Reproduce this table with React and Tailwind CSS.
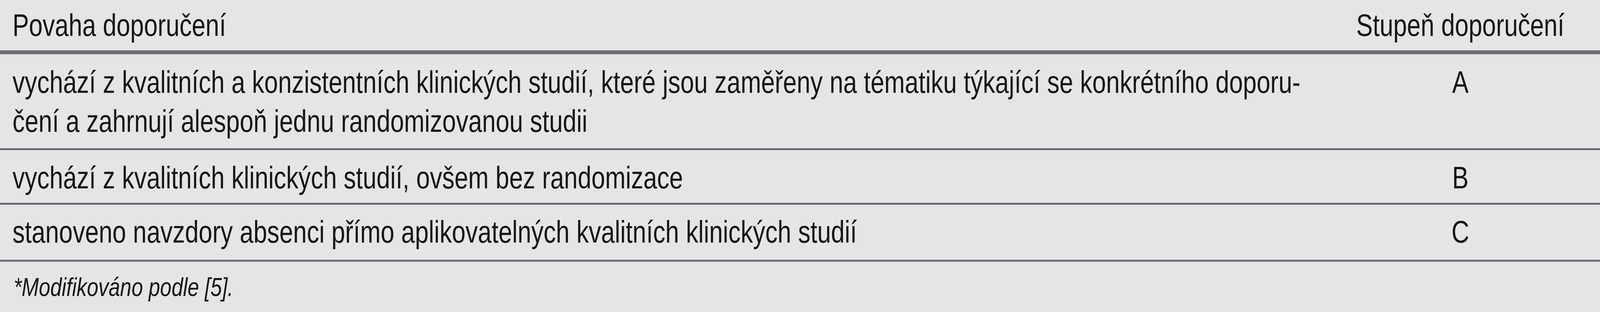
import React from "react";

const rows = [
  {
    text: (
      <>
        vychází z kvalitních a konzistentních klinických studií, které jsou zaměřeny na tématiku týkající se konkrétního doporu-
        <br />
        čení a zahrnují alespoň jednu randomizovanou studii
      </>
    ),
    grade: "A",
    pad: "pt-[22px] pb-[19px]",
  },
  {
    text: "vychází z kvalitních klinických studií, ovšem bez randomizace",
    grade: "B",
    pad: "pt-[21px] pb-[14px]",
  },
  {
    text: "stanoveno navzdory absenci přímo aplikovatelných kvalitních klinických studií",
    grade: "C",
    pad: "pt-[20px] pb-[21px]",
  },
];

export default function App() {
  // the table is laid out at 5133px and fitted to the window width
  const fit = typeof window !== "undefined" ? Math.min(1, window.innerWidth / 5133) : 1;

  return (
    <div className="w-full h-[800px] overflow-hidden bg-[#e4e5e7]">
      <div
        className="w-[5133px] h-[800px] origin-top-left text-[#161616] font-['Liberation_Sans',Arial,sans-serif]"
        style={{ transform: `scaleX(${fit})` }}
      >
        <div className="grid grid-cols-[4237px_1fr] border-b-[10px] border-[#6d6e71] pt-[15px] pb-[14px] text-[79px] leading-[100px]">
          <div className="pl-[40px]">Povaha doporučení</div>
          <div className="text-center">Stupeň doporučení</div>
        </div>
        {rows.map((row) => (
          <div
            key={row.grade}
            className={`grid grid-cols-[4237px_1fr] border-b-[5px] border-[#6d6e71] text-[79px] leading-[100px] ${row.pad}`}
          >
            <div className="pl-[40px] whitespace-nowrap">{row.text}</div>
            <div className="text-center">{row.grade}</div>
          </div>
        ))}
        <div className="pl-[44px] pt-[25px] pb-[24px] text-[66px] leading-[80px] italic">
          *Modifikováno podle [5].
        </div>
      </div>
    </div>
  );
}
